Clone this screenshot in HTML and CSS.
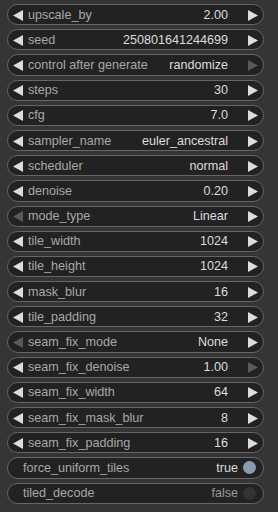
FILE: index.html
```html
<!DOCTYPE html>
<html>
<head>
<meta charset="utf-8">
<link rel="stylesheet" href="styles.css">
</head>
<body>
<div class="list">
  <div class="w"><svg class="arr" viewBox="0 0 10 11"><polygon points="10,0 0,5.5 10,11"/></svg><span class="lbl">upscale_by</span><span class="val">2.00</span><svg class="arr" viewBox="0 0 10 11"><polygon points="0,0 10,5.5 0,11"/></svg></div>
  <div class="w"><svg class="arr" viewBox="0 0 10 11"><polygon points="10,0 0,5.5 10,11"/></svg><span class="lbl">seed</span><span class="val">250801641244699</span><svg class="arr" viewBox="0 0 10 11"><polygon points="0,0 10,5.5 0,11"/></svg></div>
  <div class="w"><svg class="arr" viewBox="0 0 10 11"><polygon points="10,0 0,5.5 10,11"/></svg><span class="lbl">control after generate</span><span class="val">randomize</span><svg class="arr off" viewBox="0 0 10 11"><polygon points="0,0 10,5.5 0,11"/></svg></div>
  <div class="w"><svg class="arr" viewBox="0 0 10 11"><polygon points="10,0 0,5.5 10,11"/></svg><span class="lbl">steps</span><span class="val">30</span><svg class="arr" viewBox="0 0 10 11"><polygon points="0,0 10,5.5 0,11"/></svg></div>
  <div class="w"><svg class="arr" viewBox="0 0 10 11"><polygon points="10,0 0,5.5 10,11"/></svg><span class="lbl">cfg</span><span class="val">7.0</span><svg class="arr" viewBox="0 0 10 11"><polygon points="0,0 10,5.5 0,11"/></svg></div>
  <div class="w"><svg class="arr" viewBox="0 0 10 11"><polygon points="10,0 0,5.5 10,11"/></svg><span class="lbl">sampler_name</span><span class="val">euler_ancestral</span><svg class="arr" viewBox="0 0 10 11"><polygon points="0,0 10,5.5 0,11"/></svg></div>
  <div class="w"><svg class="arr" viewBox="0 0 10 11"><polygon points="10,0 0,5.5 10,11"/></svg><span class="lbl">scheduler</span><span class="val">normal</span><svg class="arr" viewBox="0 0 10 11"><polygon points="0,0 10,5.5 0,11"/></svg></div>
  <div class="w"><svg class="arr" viewBox="0 0 10 11"><polygon points="10,0 0,5.5 10,11"/></svg><span class="lbl">denoise</span><span class="val">0.20</span><svg class="arr" viewBox="0 0 10 11"><polygon points="0,0 10,5.5 0,11"/></svg></div>
  <div class="w"><svg class="arr off" viewBox="0 0 10 11"><polygon points="10,0 0,5.5 10,11"/></svg><span class="lbl">mode_type</span><span class="val">Linear</span><svg class="arr" viewBox="0 0 10 11"><polygon points="0,0 10,5.5 0,11"/></svg></div>
  <div class="w"><svg class="arr" viewBox="0 0 10 11"><polygon points="10,0 0,5.5 10,11"/></svg><span class="lbl">tile_width</span><span class="val">1024</span><svg class="arr" viewBox="0 0 10 11"><polygon points="0,0 10,5.5 0,11"/></svg></div>
  <div class="w"><svg class="arr" viewBox="0 0 10 11"><polygon points="10,0 0,5.5 10,11"/></svg><span class="lbl">tile_height</span><span class="val">1024</span><svg class="arr" viewBox="0 0 10 11"><polygon points="0,0 10,5.5 0,11"/></svg></div>
  <div class="w"><svg class="arr" viewBox="0 0 10 11"><polygon points="10,0 0,5.5 10,11"/></svg><span class="lbl">mask_blur</span><span class="val">16</span><svg class="arr" viewBox="0 0 10 11"><polygon points="0,0 10,5.5 0,11"/></svg></div>
  <div class="w"><svg class="arr" viewBox="0 0 10 11"><polygon points="10,0 0,5.5 10,11"/></svg><span class="lbl">tile_padding</span><span class="val">32</span><svg class="arr" viewBox="0 0 10 11"><polygon points="0,0 10,5.5 0,11"/></svg></div>
  <div class="w"><svg class="arr off" viewBox="0 0 10 11"><polygon points="10,0 0,5.5 10,11"/></svg><span class="lbl">seam_fix_mode</span><span class="val">None</span><svg class="arr" viewBox="0 0 10 11"><polygon points="0,0 10,5.5 0,11"/></svg></div>
  <div class="w"><svg class="arr" viewBox="0 0 10 11"><polygon points="10,0 0,5.5 10,11"/></svg><span class="lbl">seam_fix_denoise</span><span class="val">1.00</span><svg class="arr off" viewBox="0 0 10 11"><polygon points="0,0 10,5.5 0,11"/></svg></div>
  <div class="w"><svg class="arr" viewBox="0 0 10 11"><polygon points="10,0 0,5.5 10,11"/></svg><span class="lbl">seam_fix_width</span><span class="val">64</span><svg class="arr" viewBox="0 0 10 11"><polygon points="0,0 10,5.5 0,11"/></svg></div>
  <div class="w"><svg class="arr" viewBox="0 0 10 11"><polygon points="10,0 0,5.5 10,11"/></svg><span class="lbl">seam_fix_mask_blur</span><span class="val">8</span><svg class="arr" viewBox="0 0 10 11"><polygon points="0,0 10,5.5 0,11"/></svg></div>
  <div class="w"><svg class="arr" viewBox="0 0 10 11"><polygon points="10,0 0,5.5 10,11"/></svg><span class="lbl">seam_fix_padding</span><span class="val">16</span><svg class="arr" viewBox="0 0 10 11"><polygon points="0,0 10,5.5 0,11"/></svg></div>
  <div class="w tog"><span class="lbl">force_uniform_tiles</span><span class="val">true</span><span class="dot on"></span></div>
  <div class="w tog"><span class="lbl">tiled_decode</span><span class="val dim">false</span><span class="dot"></span></div>
</div>
</body>
</html>
```
FILE: styles.css
```css
html, body {
  margin: 0;
  padding: 0;
  background: #353535;
  width: 278px;
  height: 512px;
  overflow: hidden;
}
.list {
  display: flex;
  flex-direction: column;
  gap: 4px;
  padding: 4px 14px 0 7px;
  font-family: "Liberation Sans", Arial, sans-serif;
  font-size: 12.6px;
}
.w {
  box-sizing: border-box;
  height: 21.2px;
  border: 1px solid #666;
  border-radius: 11px;
  background: #222;
  display: flex;
  align-items: center;
  padding: 0 5px;
}
.arr {
  width: 10px;
  height: 11px;
  flex: none;
  fill: #ddd;
  margin-top: 1px;
}
.arr.off { fill: #5a5a5a; }
.lbl {
  flex: 1;
  color: #a8a8a8;
  margin-left: 5px;
  white-space: nowrap;
}
.val {
  color: #ddd;
  margin-right: 20px;
  white-space: nowrap;
}
.tog { padding: 0 7px 0 15px; }
.tog .lbl { margin-left: 0; }
.tog .val { margin-right: 5px; }
.val.dim { color: #999; }
.dot {
  width: 13px;
  height: 13px;
  border-radius: 50%;
  background: #333;
  flex: none;
}
.dot.on { background: #8a9bb0; }
```
